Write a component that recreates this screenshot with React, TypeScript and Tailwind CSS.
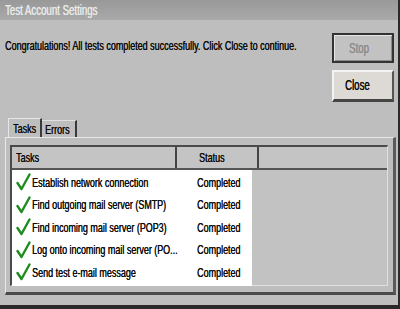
const tasks = [
  "Establish network connection",
  "Find outgoing mail server (SMTP)",
  "Find incoming mail server (POP3)",
  "Log onto incoming mail server (PO...",
  "Send test e-mail message",
];

// squashed text, the screenshot is narrow
const N = ({ children, className = "" }: { children: React.ReactNode; className?: string }) => (
  <span className={"inline-block origin-left scale-x-[0.69] whitespace-nowrap [text-shadow:0.3px_0_0_currentColor] " + className}>{children}</span>
);

const Check = () => (
  <svg width="16" height="18" viewBox="0 0 16 18" className="shrink-0">
    <path d="M2.5 10 L6.5 16 L14.5 1.5" fill="none" stroke="#1e8c1e" strokeWidth="2.4" strokeLinecap="round" strokeLinejoin="round" />
  </svg>
);

const App = () => (
  <div className="w-[400px] h-[309px] flex flex-col bg-[#bebebe] font-['Liberation_Sans',Arial,sans-serif] text-[13px] text-[#0d0d0d] border-r-2 border-b-4 border-[#2a2a2a] overflow-hidden">
    {/* title bar */}
    <div className="h-[20px] shrink-0 bg-gradient-to-b from-[#999] to-[#a9a9a9] pl-[5px] leading-[20px] text-[14px] text-[#e8e8e8]">
      <N>Test Account Settings</N>
    </div>

    {/* message + buttons */}
    <div className="flex pt-[13px] pl-[5px] pr-[4px]">
      <p className="flex-1 min-w-0 mt-[5px] leading-[16px]">
        <N>Congratulations! All tests completed successfully. Click Close to continue.</N>
      </p>
      <div className="flex flex-col gap-[7px] w-[62px] shrink-0">
        <div className="h-[30px] flex items-center justify-center border-2 border-[#333] bg-[#c2c2c2] shadow-[inset_1px_1px_0_#e6e6e6,inset_-1px_-1px_0_#8a8a8a] text-[#8c8c8c] text-[14px]">
          <N className="origin-center">Stop</N>
        </div>
        <div className="h-[32px] flex items-center justify-center bg-[#dddad5] border-t-2 border-l-2 border-[#f4f4f4] border-r-2 border-b-[3px] border-r-[#555] border-b-[#444] text-[14px]">
          <N className="origin-center">Close</N>
        </div>
      </div>
    </div>

    {/* tabs */}
    <div className="mt-[16px] flex items-end pl-[8px] h-[19px]">
      <div className="h-[19px] w-[34px] pl-[4px] leading-[19px] border-l border-t border-[#e6e6e6] border-r-2 border-r-[#3a3a3a] bg-[#bebebe] relative z-10">
        <N>Tasks</N>
      </div>
      <div className="h-[17px] w-[35px] pl-[3px] leading-[17px] border-t border-[#e0e0e0] border-r-2 border-r-[#3a3a3a]">
        <N>Errors</N>
      </div>
    </div>

    {/* panel */}
    <div className="ml-[5px] mr-[2px] h-[158px] border-t border-l border-[#e8e8e8] border-r-[3px] border-b-[3px] border-r-[#5a5a5a] border-b-[#4a4a4a] pt-[7px] pl-[4px] pr-[5px] pb-[6px]">
      <div className="h-full flex flex-col border-t-2 border-l-2 border-[#4a4a4a] border-r border-b border-r-[#e0e0e0] border-b-[#e0e0e0] bg-[#c2c2c2]">
        {/* header */}
        <div className="h-[23px] shrink-0 flex border-b-2 border-[#555] bg-[#c4c4c4] leading-[21px]">
          <div className="w-[165px] pl-[4px] border-r-2 border-[#444]">
            <N>Tasks</N>
          </div>
          <div className="w-[82px] text-center border-r-2 border-[#444]">
            <N className="origin-center">Status</N>
          </div>
          <div className="flex-1" />
        </div>
        {/* rows */}
        <div className="w-[240px] bg-white pt-[1px] pb-[2px]">
          {tasks.map((t) => (
            <div key={t} className="h-[22.5px] flex items-center">
              <div className="w-[165px] flex items-center pl-[3px] gap-[1px] overflow-visible">
                <Check />
                <N>{t}</N>
              </div>
              <div className="pl-[20px]">
                <N>Completed</N>
              </div>
            </div>
          ))}
        </div>
      </div>
    </div>
  </div>
);

export default App;
